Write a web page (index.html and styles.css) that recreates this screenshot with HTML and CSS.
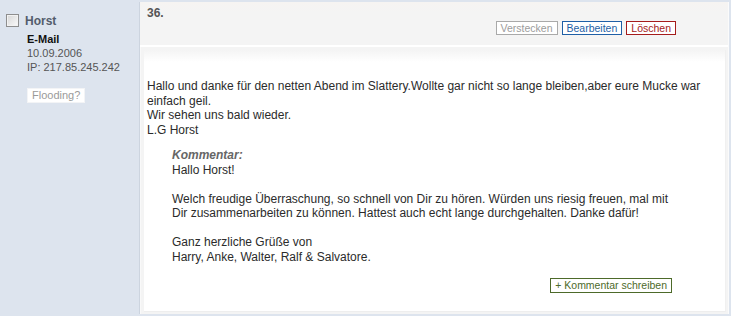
FILE: index.html
```html
<!DOCTYPE html>
<html lang="de">
<head>
    <meta charset="UTF-8">
    <title>Gästebuch</title>
    <link rel="stylesheet" href="styles.css">
</head>
<body>

    <div class="entry">
        <!-- author column -->
        <aside class="author">
            <div class="name-row">
                <span class="check"></span>
                <span class="name">Horst</span>
            </div>
            <div class="meta">
                <div class="mail">E-Mail</div>
                <div>10.09.2006</div>
                <div>IP: 217.85.245.242</div>
            </div>
            <span class="btn btn-flood">Flooding?</span>
        </aside>

        <!-- post -->
        <section class="post">
            <div class="post-head">
                <div class="num">36.</div>
                <div class="actions">
                    <span class="btn btn-grey">Verstecken</span>
                    <span class="btn btn-blue">Bearbeiten</span>
                    <span class="btn btn-red">Löschen</span>
                </div>
            </div>

            <div class="post-body">
                <p class="message">
                    Hallo und danke für den netten Abend im Slattery.Wollte gar nicht so lange bleiben,aber eure Mucke war einfach geil.<br>
                    Wir sehen uns bald wieder.<br>
                    L.G Horst
                </p>

                <div class="comment">
                    <div class="comment-label">Kommentar:</div>
                    Hallo Horst!<br>
                    <br>
                    Welch freudige Überraschung, so schnell von Dir zu hören. Würden uns riesig freuen, mal mit Dir zusammenarbeiten zu können. Hattest auch echt lange durchgehalten. Danke dafür!<br>
                    <br>
                    Ganz herzliche Grüße von<br>
                    Harry, Anke, Walter, Ralf &amp; Salvatore.
                </div>

                <div class="comment-actions">
                    <span class="btn btn-green">+ Kommentar schreiben</span>
                </div>
            </div>
        </section>
    </div>

</body>
</html>
```

FILE: styles.css
```css
body {
    margin: 0;
    padding: 0;
    background-color: #dde4ee;
    font-family: 'Liberation Sans', Arial, sans-serif;
    color: #2b2b2b;
}

.entry {
    display: flex;
    width: 729px;
    height: 314px;
}

/* author column */

.author {
    width: 139px;
    flex-shrink: 0;
    padding: 13px 0 0 6px;
    box-sizing: border-box;
}

.name-row {
    display: flex;
    align-items: center;
    gap: 6px;
    height: 14px;
}

.check {
    width: 11px;
    height: 11px;
    border: 1px solid #8e8e8e;
    background: linear-gradient(135deg, #d6d6d6, #fafafa);
    box-shadow: inset 0 0 0 1px #f2f2f2;
}

.name {
    font-size: 12px;
    font-weight: bold;
    color: #535c6c;
    line-height: 14px;
    margin-top: 1px;
}

.meta {
    margin: 5px 0 0 21px;
    font-size: 11px;
    line-height: 14px;
    color: #555;
}

.mail {
    font-weight: bold;
    color: #111;
}

.btn {
    display: inline-block;
    font-size: 10.5px;
    line-height: 12px;
    padding: 0 4px;
    background-color: #fff;
    border: 1px solid;
    white-space: nowrap;
}

.btn-flood {
    margin: 14px 0 0 21px;
    border-color: #f3f4f6;
    color: #9a9a9a;
    font-size: 11px;
    line-height: 13px;
}

.btn-grey {
    border-color: #a9a9a9;
    color: #9c9c9c;
}

.btn-blue {
    border-color: #1f5fa6;
    color: #1f5fa6;
}

.btn-red {
    border-color: #a51c1c;
    color: #a51c1c;
}

.btn-green {
    border-color: #4d6a2a;
    color: #4d6a2a;
}

/* post */

.post {
    flex: 1;
    margin-top: 2px;
    background-color: #f4f4f4;
    border-left: 1px solid #ccd4df;
    border-right: 1px solid #fbfbfb;
    box-shadow: inset 1px 0 0 #f9f9f9;
    display: flex;
    flex-direction: column;
}

.post-head {
    height: 45px;
    padding: 4px 52px 0 7px;
    box-sizing: border-box;
    border-bottom: 2px solid #fff;
    background: linear-gradient(#f6f4f2, #f4f4f4 10px);
}

.num {
    font-size: 12px;
    font-weight: bold;
    color: #555;
    line-height: 14px;
}

.actions {
    display: flex;
    justify-content: flex-end;
    gap: 4px;
    margin-top: 1px;
}

.post-body {
    flex: 1;
    margin: 3px 2px 2px 4px;
    padding: 29px 3px 0 3px;
    background: linear-gradient(#f4f4f4, #fff 12px);
    border-right: 1px solid #f0f0f0;
    border-bottom: 1px solid #eeeeee;
    font-size: 12px;
    line-height: 14.5px;
}

.message {
    margin: 0;
}

.comment {
    margin: 11px 44px 0 25px;
}

.comment-label {
    font-weight: bold;
    font-style: italic;
    color: #666;
}

.comment-actions {
    display: flex;
    justify-content: flex-end;
    padding-right: 50px;
    margin-top: 14px;
}

.comment-actions .btn {
    line-height: 13px;
}
```
